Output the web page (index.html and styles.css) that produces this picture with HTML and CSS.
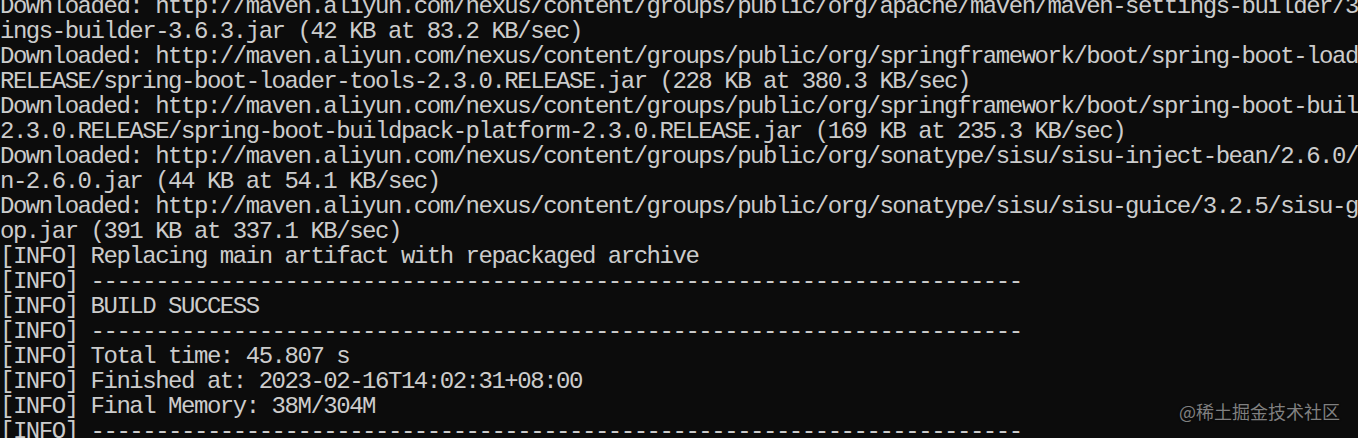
FILE: index.html
```html
<!DOCTYPE html>
<html lang="en">
<head>
<meta charset="utf-8">
<title>Console</title>
<link rel="stylesheet" href="styles.css">
</head>
<body>
<main class="console">
<div class="line">Downloaded: http://maven.aliyun.com/nexus/content/groups/public/org/apache/maven/maven-settings-builder/3</div>
<div class="line">ings-builder-3.6.3.jar (42 KB at 83.2 KB/sec)</div>
<div class="line">Downloaded: http://maven.aliyun.com/nexus/content/groups/public/org/springframework/boot/spring-boot-load</div>
<div class="line">RELEASE/spring-boot-loader-tools-2.3.0.RELEASE.jar (228 KB at 380.3 KB/sec)</div>
<div class="line">Downloaded: http://maven.aliyun.com/nexus/content/groups/public/org/springframework/boot/spring-boot-buil</div>
<div class="line">2.3.0.RELEASE/spring-boot-buildpack-platform-2.3.0.RELEASE.jar (169 KB at 235.3 KB/sec)</div>
<div class="line">Downloaded: http://maven.aliyun.com/nexus/content/groups/public/org/sonatype/sisu/sisu-inject-bean/2.6.0/</div>
<div class="line">n-2.6.0.jar (44 KB at 54.1 KB/sec)</div>
<div class="line">Downloaded: http://maven.aliyun.com/nexus/content/groups/public/org/sonatype/sisu/sisu-guice/3.2.5/sisu-g</div>
<div class="line">op.jar (391 KB at 337.1 KB/sec)</div>
<div class="line">[INFO] Replacing main artifact with repackaged archive</div>
<div class="line">[INFO] ------------------------------------------------------------------------</div>
<div class="line">[INFO] BUILD SUCCESS</div>
<div class="line">[INFO] ------------------------------------------------------------------------</div>
<div class="line">[INFO] Total time: 45.807 s</div>
<div class="line">[INFO] Finished at: 2023-02-16T14:02:31+08:00</div>
<div class="line">[INFO] Final Memory: 38M/304M</div>
<div class="line">[INFO] ------------------------------------------------------------------------</div>
</main>
<div class="watermark">@稀土掘金技术社区</div>
</body>
</html>
```

FILE: styles.css
```css
html, body {
  margin: 0;
  padding: 0;
  background: #0c0c0c;
  overflow: hidden;
  width: 1358px;
  height: 438px;
}

body {
  position: relative;
}

.console {
  width: 1358px;
  overflow: hidden;
  margin-top: -6px;
  font-family: "Liberation Mono", "DejaVu Sans Mono", monospace;
  font-size: 24px;
  letter-spacing: -1.47px;
  line-height: 25px;
  color: #cccccc;
}

.line {
  white-space: pre;
  height: 25px;
}

.watermark {
  position: absolute;
  right: 18px;
  top: 400px;
  font-family: "Noto Sans CJK SC", "Noto Sans", sans-serif;
  font-size: 18px;
  line-height: 22px;
  color: #808080;
  text-shadow: 0 0 2px rgba(0, 0, 0, 0.6);
}
```
